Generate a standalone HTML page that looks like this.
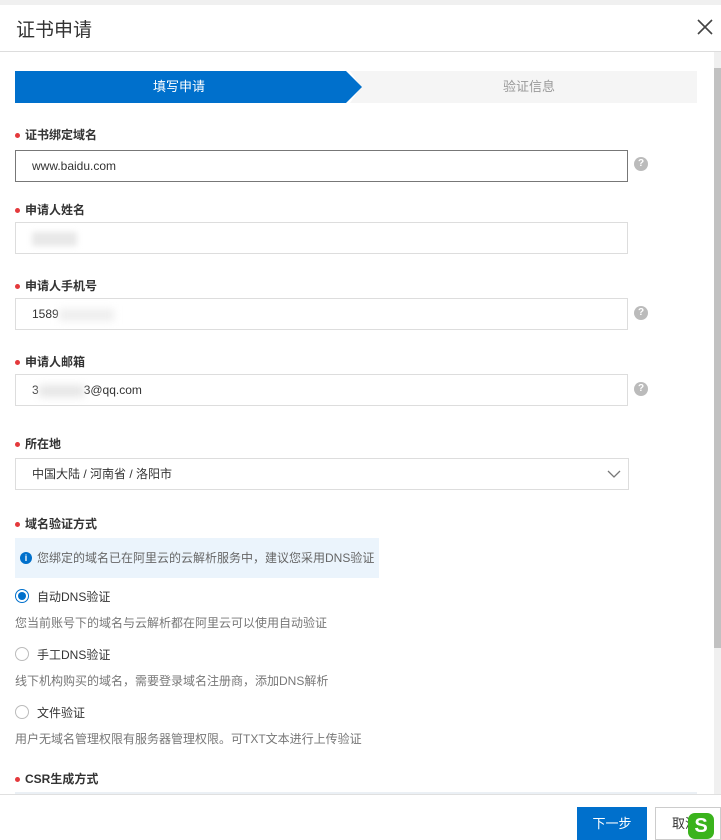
<!DOCTYPE html>
<html><head><meta charset="utf-8"><style>
*{margin:0;padding:0;box-sizing:border-box}
body{width:721px;height:840px;overflow:hidden;background:#fff;font-family:"Liberation Sans","Noto Sans CJK SC",sans-serif;position:relative;color:#333}
.a{position:absolute}
.lbl{position:absolute;left:15px;font-size:12px;font-weight:bold;color:#333}
.lbl:before{content:"";display:inline-block;width:5px;height:5px;border-radius:50%;background:#e4393c;margin-right:5px;vertical-align:middle}
.in{position:absolute;left:15px;width:613px;height:32px;border:1px solid #ddd;font-size:12px;padding-left:16px;line-height:30px;color:#333}
.q{position:absolute;left:634px;width:14px;height:14px;border-radius:50%;background:#bbb;color:#fff;font-size:10px;text-align:center;line-height:14px;font-weight:bold}
.r{position:absolute;left:15px;width:14px;height:14px;border-radius:50%;border:1px solid #bbb}
.rt{position:absolute;left:37px;font-size:12px;color:#333}
.d{position:absolute;left:15px;font-size:12px;color:#777}
</style></head><body>
<div class="a" style="left:0;top:0;width:721px;height:5px;background:#f0f0f0"></div>
<div class="a" style="left:16px;top:15px;font-size:19px;color:#333">证书申请</div>
<svg class="a" style="left:697px;top:19px" width="16" height="16"><path d="M1 1L15 15M15 1L1 15" stroke="#444" stroke-width="1.6"/></svg>
<div class="a" style="left:0;top:51px;width:721px;height:1px;background:#ddd"></div>
<div class="a" style="left:714px;top:52px;width:7px;height:743px;background:#f0f0f0"></div>
<div class="a" style="left:714px;top:68px;width:7px;height:580px;background:#c1c1c1"></div>
<svg class="a" style="left:15px;top:71px" width="682" height="32"><polygon points="347,0 682,0 682,32 335,32 346,16 335,0" fill="#f5f5f5"/><polygon points="0,0 331,0 347,16 331,32 0,32" fill="#0070cc"/></svg>
<div class="a" style="left:153px;top:78px;font-size:13px;color:#fff;line-height:18px">填写申请</div>
<div class="a" style="left:503px;top:78px;font-size:13px;color:#999;line-height:18px">验证信息</div>

<div class="lbl" style="top:126px">证书绑定域名</div>
<div class="in" style="top:150px;border-color:#777">www.baidu.com</div><div class="q" style="top:157px">?</div>
<div class="lbl" style="top:201px">申请人姓名</div>
<div class="in" style="top:222px"><span style="display:inline-block;width:45px;height:14px;background:#e8e8e8;vertical-align:middle;filter:blur(3px)"></span></div>
<div class="lbl" style="top:277px">申请人手机号</div>
<div class="in" style="top:298px">1589<span style="display:inline-block;width:55px;height:12px;background:#eee;vertical-align:middle;filter:blur(4px)"></span></div><div class="q" style="top:306px">?</div>
<div class="lbl" style="top:353px">申请人邮箱</div>
<div class="in" style="top:374px">3<span style="display:inline-block;width:45px;height:12px;background:#e6e6e6;vertical-align:middle;filter:blur(4px)"></span>3@qq.com</div><div class="q" style="top:382px">?</div>
<div class="lbl" style="top:435px">所在地</div>
<div class="in" style="top:458px;width:614px">中国大陆 / 河南省 / 洛阳市
<svg class="a" style="left:591px;top:11px" width="14" height="8"><path d="M1 1 L7 7 L13 1" stroke="#777" fill="none" stroke-width="1.3"/></svg></div>
<div class="lbl" style="top:515px">域名验证方式</div>
<div class="a" style="left:15px;top:538px;width:364px;height:40px;background:#ebf4fc"></div>
<div class="a" style="left:20px;top:552px;width:12px;height:12px;border-radius:50%;background:#0070cc;color:#fff;font-size:9px;font-weight:bold;text-align:center;line-height:12px">i</div>
<div class="a" style="left:37px;top:549px;font-size:12px;color:#666">您绑定的域名已在阿里云的云解析服务中，建议您采用DNS验证</div>
<div class="r" style="top:589px;border-color:#0070cc"><div style="margin:2px;width:8px;height:8px;border-radius:50%;background:#0070cc"></div></div>
<div class="rt" style="top:588px">自动DNS验证</div>
<div class="d" style="top:614px">您当前账号下的域名与云解析都在阿里云可以使用自动验证</div>
<div class="r" style="top:647px"></div><div class="rt" style="top:646px">手工DNS验证</div>
<div class="d" style="top:672px">线下机构购买的域名，需要登录域名注册商，添加DNS解析</div>
<div class="r" style="top:705px"></div><div class="rt" style="top:704px">文件验证</div>
<div class="d" style="top:730px">用户无域名管理权限有服务器管理权限。可TXT文本进行上传验证</div>
<div class="lbl" style="top:770px">CSR生成方式</div>
<div class="a" style="left:15px;top:792px;width:682px;height:3px;background:#ebf0f5"></div>
<div class="a" style="left:0;top:794px;width:721px;height:1px;background:#e0e0e0"></div>
<div class="a" style="left:577px;top:807px;width:70px;height:33px;background:#0070cc;color:#fff;font-size:13px;text-align:center;line-height:33px">下一步</div>
<div class="a" style="left:655px;top:807px;width:66px;height:33px;border:1px solid #ccc;background:#fff;font-size:13px;line-height:31px;padding-left:16px">取消</div>
<div class="a" style="left:688px;top:813px;width:26px;height:26px;border-radius:7px;background:#3ab31c;color:#fff;font-weight:bold;font-size:20px;text-align:center;line-height:26px">S</div>
</body></html>
